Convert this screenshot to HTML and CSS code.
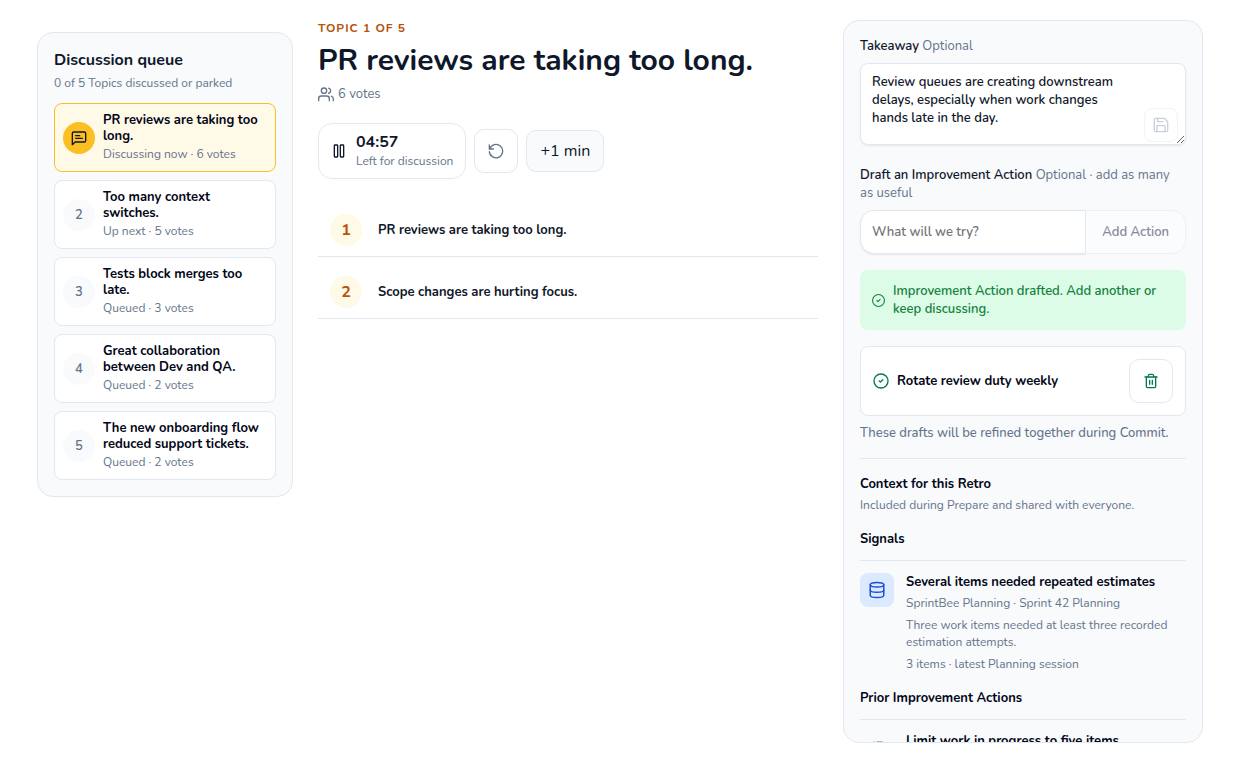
FILE: index.html
```html
<!DOCTYPE html>
<html lang="en">
<head>
  <meta charset="UTF-8" />
  <meta name="viewport" content="width=device-width, initial-scale=1" />
  <title>Retro discussion</title>
  <link rel="stylesheet" href="styles.css">
</head>
<body>
  <div class="layout">
    <aside class="panel queue">
      <h2>Discussion queue</h2>
      <p class="muted">0 of 5 Topics discussed or parked</p>
      <ol class="queue-list">
        <li class="topic active">
          <span class="badge">
            <svg class="icon" width="16" height="16" viewBox="0 0 24 24"><path d="M4 3h16a2 2 0 0 1 2 2v11a2 2 0 0 1-2 2H6l-4 4V5a2 2 0 0 1 2-2z"/><path d="M7 8.500h6M7 12.500h10"/></svg>
          </span>
          <div>
            <strong>PR reviews are taking too long.</strong>
            <span class="muted">Discussing now · 6 votes</span>
          </div>
        </li>
        <li class="topic">
          <span class="badge">2</span>
          <div>
            <strong>Too many context switches.</strong>
            <span class="muted">Up next · 5 votes</span>
          </div>
        </li>
        <li class="topic">
          <span class="badge">3</span>
          <div>
            <strong>Tests block merges too late.</strong>
            <span class="muted">Queued · 3 votes</span>
          </div>
        </li>
        <li class="topic">
          <span class="badge">4</span>
          <div>
            <strong>Great collaboration between Dev and QA.</strong>
            <span class="muted">Queued · 2 votes</span>
          </div>
        </li>
        <li class="topic">
          <span class="badge">5</span>
          <div>
            <strong>The new onboarding flow reduced support tickets.</strong>
            <span class="muted">Queued · 2 votes</span>
          </div>
        </li>
      </ol>
    </aside>

    <main class="stage">
      <p class="eyebrow">Topic 1 of 5</p>
      <h1>PR reviews are taking too long.</h1>
      <p class="votes">
        <svg class="icon" width="16" height="16" viewBox="0 0 24 24"><path d="M17 22v-3a4 4 0 0 0-4-4H5a4 4 0 0 0-4 4v3"/><circle cx="9" cy="7" r="4"/><path d="M23 22v-3a4 4 0 0 0-3-3.870"/><path d="M16 3.130a4 4 0 0 1 0 7.750"/></svg>
        6 votes
      </p>

      <div class="controls">
        <button type="button" class="timer">
          <svg class="icon" width="16" height="16" viewBox="0 0 24 24"><rect x="5" y="3" width="5" height="18" rx="1"/><rect x="14" y="3" width="5" height="18" rx="1"/></svg>
          <span>
            <strong>04:57</strong>
            <span class="muted">Left for discussion</span>
          </span>
        </button>
        <button type="button" class="square" aria-label="Reset timer">
          <svg class="icon" width="16" height="16" viewBox="0 0 24 24"><path d="M2 3v6h6"/><path d="M2.500 9a10 10 0 1 1-.5 4"/></svg>
        </button>
        <button type="button" class="extend">+1 min</button>
      </div>

      <ol class="points">
        <li><span class="point-number">1</span>PR reviews are taking too long.</li>
        <li><span class="point-number">2</span>Scope changes are hurting focus.</li>
      </ol>
    </main>

    <aside class="panel notes">
      <label for="takeaway">Takeaway <span>Optional</span></label>
      <div class="takeaway">
        <textarea id="takeaway">Review queues are creating downstream delays, especially when work changes hands late in the day.</textarea>
        <button type="button" class="save" aria-label="Save takeaway" disabled>
          <svg class="icon" width="16" height="16" viewBox="0 0 24 24"><path d="M4 2h13l5 5v13a2 2 0 0 1-2 2H4a2 2 0 0 1-2-2V4a2 2 0 0 1 2-2z"/><path d="M6 22v-8a1 1 0 0 1 1-1h10a1 1 0 0 1 1 1v8"/><path d="M7 2v4a1 1 0 0 0 1 1h7"/></svg>
        </button>
      </div>

      <label for="action">Draft an Improvement Action <span>Optional · add as many as useful</span></label>
      <div class="action-form">
        <input type="text" id="action" placeholder="What will we try?">
        <button type="button" disabled>Add Action</button>
      </div>

      <div class="alert" role="status">
        <svg class="icon" width="13" height="13" viewBox="0 0 24 24"><circle cx="12" cy="12" r="11"/><path d="M9 12l2 2 4-4"/></svg>
        Improvement Action drafted. Add another or keep discussing.
      </div>

      <div class="draft">
        <svg class="icon" width="16" height="16" viewBox="0 0 24 24"><circle cx="12" cy="12" r="10.500"/><path d="M9.500 12l1.700 1.700 3.500-3.500"/></svg>
        <strong>Rotate review duty weekly</strong>
        <button type="button" class="square" aria-label="Delete draft">
          <svg class="icon" width="16" height="16" viewBox="0 0 24 24"><path d="M3 6h18"/><path d="M5 6v14a2 2 0 0 0 2 2h10a2 2 0 0 0 2-2V6"/><path d="M8 6V4a2 2 0 0 1 2-2h4a2 2 0 0 1 2 2v2"/><path d="M10 11v6M14 11v6"/></svg>
        </button>
      </div>
      <p class="hint">These drafts will be refined together during Commit.</p>

      <section class="context">
        <h3>Context for this Retro</h3>
        <p class="muted">Included during Prepare and shared with everyone.</p>

        <h3>Signals</h3>
        <article class="signal">
          <span class="tile">
            <svg class="icon" width="18" height="18" viewBox="0 0 24 24"><ellipse cx="12" cy="5" rx="9" ry="3"/><path d="M3 5v14c0 1.660 4 3 9 3s9-1.340 9-3V5"/><path d="M3 12c0 1.660 4 3 9 3s9-1.340 9-3"/></svg>
          </span>
          <div>
            <h4>Several items needed repeated estimates</h4>
            <p class="muted">SprintBee Planning · Sprint 42 Planning</p>
            <p class="muted">Three work items needed at least three recorded estimation attempts.</p>
            <p class="muted">3 items · latest Planning session</p>
          </div>
        </article>

        <h3>Prior Improvement Actions</h3>
        <article class="signal">
          <span class="tile plain">
            <svg class="icon" width="18" height="18" viewBox="0 0 24 24"><path d="M3 4l2 2 3-3M12 3h7M12 12h9M12 20h9M3 12l2 2 3-3"/></svg>
          </span>
          <div>
            <h4>Limit work in progress to five items</h4>
          </div>
        </article>
      </section>
    </aside>
  </div>
</body>
</html>
```
FILE: styles.css
```css
* { box-sizing: border-box; }
body {
  margin: 0; background: #fff; color: #0f172a;
  font-family: Nunito, Lato, sans-serif; font-size: 13px; line-height: 18px;
}
h1, h2, h3, h4, p, ol { margin: 0; padding: 0; }
ol { list-style: none; }
button, input, textarea { font: inherit; color: inherit; }
button { cursor: pointer; }
button:disabled { cursor: default; }
strong { font-weight: 700; }
.icon {
  fill: none; stroke: currentColor; stroke-width: 2;
  stroke-linecap: round; stroke-linejoin: round; flex-shrink: 0;
}
.muted { color: #64748b; font-size: 12px; line-height: 17px; }

.layout {
  display: grid; grid-template-columns: 256px minmax(0, 1fr) 360px; gap: 25px;
  align-items: start; padding: 20px 37px 0;
}
.panel { background: #f8fafc; border: 1px solid #e2e8f0; border-radius: 16px; padding: 16px; }

/* queue */
.queue { margin-top: 12px; }
.queue h2 { font-size: 16px; line-height: 22px; margin-bottom: 4px; }
.queue-list { display: grid; gap: 8px; margin-top: 11px; }
.topic {
  display: flex; align-items: center; gap: 8px; padding: 8px;
  background: #fff; border: 1px solid #e2e8f0; border-radius: 8px;
}
.topic strong { display: block; line-height: 16px; margin-bottom: 2px; }
.topic strong, .draft strong, .context h3, .context h4 { color: #020617; }
.topic .muted { display: block; }
.badge, .point-number {
  display: flex; align-items: center; justify-content: center; flex-shrink: 0;
  width: 32px; height: 32px; border-radius: 50%;
}
.badge { background: #f8fafc; color: #64748b; font-weight: 600; }
.topic.active { background: #fff9e8; border-color: #fbbf24; }
.topic.active .badge { background: #fbbf24; color: #0f172a; }

/* current topic */
.eyebrow {
  color: #b45309; font-size: 12px; line-height: 16px; font-weight: 700;
  letter-spacing: 1px; text-transform: uppercase;
}
.stage h1 { font-size: 30px; line-height: 36px; margin: 7px 0 6px; }
.votes { display: flex; align-items: center; gap: 4px; color: #64748b; }
.controls { display: flex; align-items: center; gap: 8px; margin-top: 20px; }
.timer {
  display: flex; align-items: center; gap: 9px; padding: 8px 12px; text-align: left;
  background: #fff; border: 1px solid #e2e8f0; border-radius: 14px;
}
.timer strong { display: block; font-size: 16px; line-height: 21px; }
.timer .muted { display: block; }
.square {
  display: flex; align-items: center; justify-content: center; flex-shrink: 0;
  width: 44px; height: 44px; padding: 0; color: #64748b;
  background: #fff; border: 1px solid #e2e8f0; border-radius: 10px;
}
.extend {
  height: 42px; padding: 0 13px; font-size: 16px;
  background: #f8fafc; border: 1px solid #e2e8f0; border-radius: 10px;
}
.points { margin-top: 16px; }
.points li {
  display: flex; align-items: center; gap: 16px; height: 62px; padding: 8px 12px 0;
  font-weight: 700; border-bottom: 1px solid #e2e8f0;
}
.point-number { background: #fff9e8; color: #b45309; font-size: 16px; font-weight: 700; }

/* notes */
.notes { height: calc(100vh - 34px); overflow: hidden; }
.notes label { display: block; font-weight: 600; margin-bottom: 8px; }
.notes label span { color: #64748b; font-weight: 400; }
.takeaway { position: relative; margin-bottom: 21px; }
.takeaway textarea {
  display: block; width: 100%; height: 82px; padding: 9px 48px 9px 11px; font-weight: 600;
  background: #fff; border: 1px solid #e2e8f0; border-radius: 8px; resize: vertical;
  box-shadow: 0 1px 2px rgba(15,23,42,0.08);
}
.save {
  position: absolute; right: 8px; bottom: 3px; width: 34px; height: 34px; padding: 0;
  display: flex; align-items: center; justify-content: center;
  background: #fff; border: 1px solid #e2e8f0; border-radius: 8px; opacity: 0.5; color: #94a3b8;
}
.action-form { display: flex; }
.action-form input {
  flex: 1; min-width: 0; height: 44px; padding: 0 11px; font-weight: 600; background: #fff;
  border: 1px solid #e2e8f0; border-radius: 14px 0 0 14px; box-shadow: 0 1px 2px rgba(15,23,42,0.08);
}
.action-form input::placeholder { color: #757575; }
.action-form button {
  height: 44px; padding: 0 16px; font-weight: 600; color: #83899a; background: #fbfcfd;
  border: 1px solid #edf1f6; border-left: 0; border-radius: 0 14px 14px 0;
}
.alert {
  display: flex; align-items: center; gap: 8px; margin-top: 16px; padding: 12px;
  background: #dcfce7; color: #15803d; border-radius: 8px; font-weight: 600;
}
.draft {
  display: flex; align-items: center; gap: 8px; margin-top: 16px; padding: 12px;
  background: #fff; border: 1px solid #e2e8f0; border-radius: 8px;
}
.draft strong { flex: 1; }
.draft .icon { color: #047857; }
.hint { color: #64748b; font-weight: 500; margin-top: 8px; }
.context { margin-top: 16px; padding-top: 16px; border-top: 1px solid #e2e8f0; }
.context h3 { font-size: 13px; line-height: 18px; }
.context h3 + .muted { margin-top: 4px; }
.context .muted + h3, .signal + h3 { margin-top: 16px; }
.signal { display: flex; gap: 12px; margin-top: 12px; padding-top: 12px; border-top: 1px solid #e2e8f0; }
.signal h4 { font-size: 13px; line-height: 18px; }
.signal .muted { margin-top: 4px; }
.signal .muted + .muted { margin-top: 5px; }
.tile {
  display: flex; align-items: center; justify-content: center; flex-shrink: 0;
  width: 34px; height: 34px; border-radius: 8px; background: #dbeafe; color: #1d4ed8;
}
.tile.plain { background: #f8fafc; color: #64748b; }
```
